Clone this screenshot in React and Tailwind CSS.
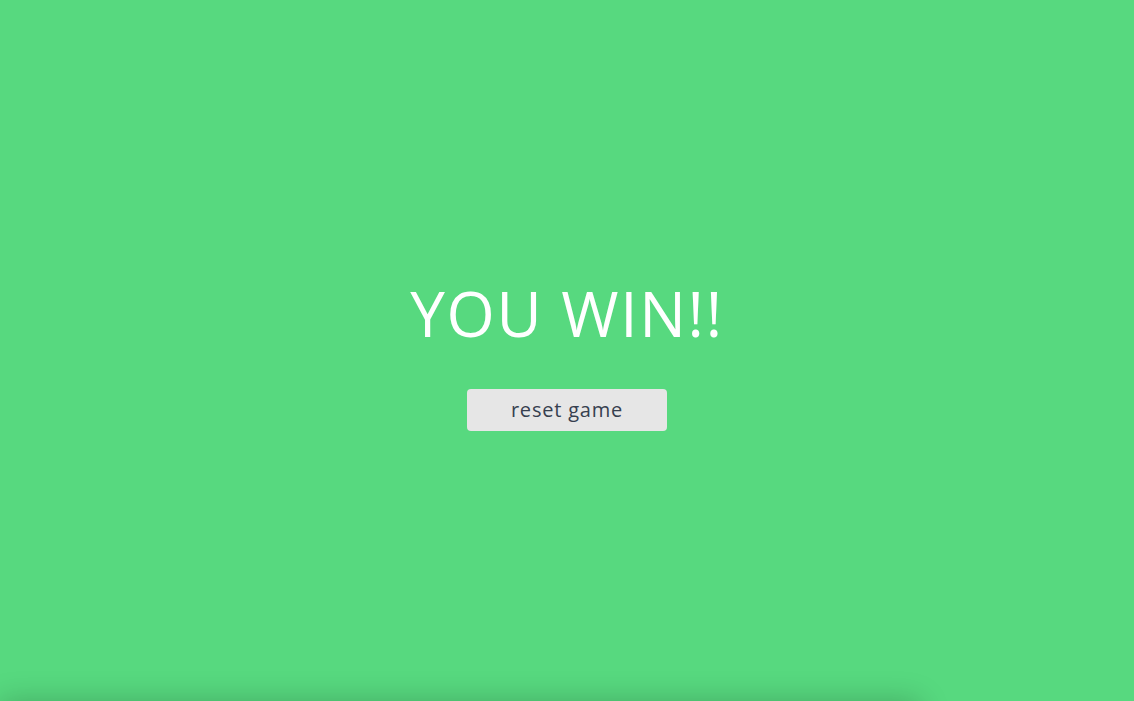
export default function App() {
  return (
    <div className="w-[1134px] overflow-hidden bg-[#57d97f]" style={{ fontFamily: '"Open Sans", "Noto Sans", sans-serif' }}>
      <div className="h-[701px] flex flex-col items-center justify-center">
        <h1 className="text-white text-[62px] leading-[80px] font-normal tracking-[1.7px] mt-[2px]">YOU WIN!!</h1>
        <button className="mt-[36px] w-[200px] h-[42px] rounded-[4px] bg-[#e6e6e6] text-[#36404f] text-[20px] tracking-[0.8px]">reset game</button>
      </div>
      <div className="h-[40px] w-[920px] shadow-[0_0_30px_rgba(0,0,0,0.22)]"></div>
    </div>
  );
}
